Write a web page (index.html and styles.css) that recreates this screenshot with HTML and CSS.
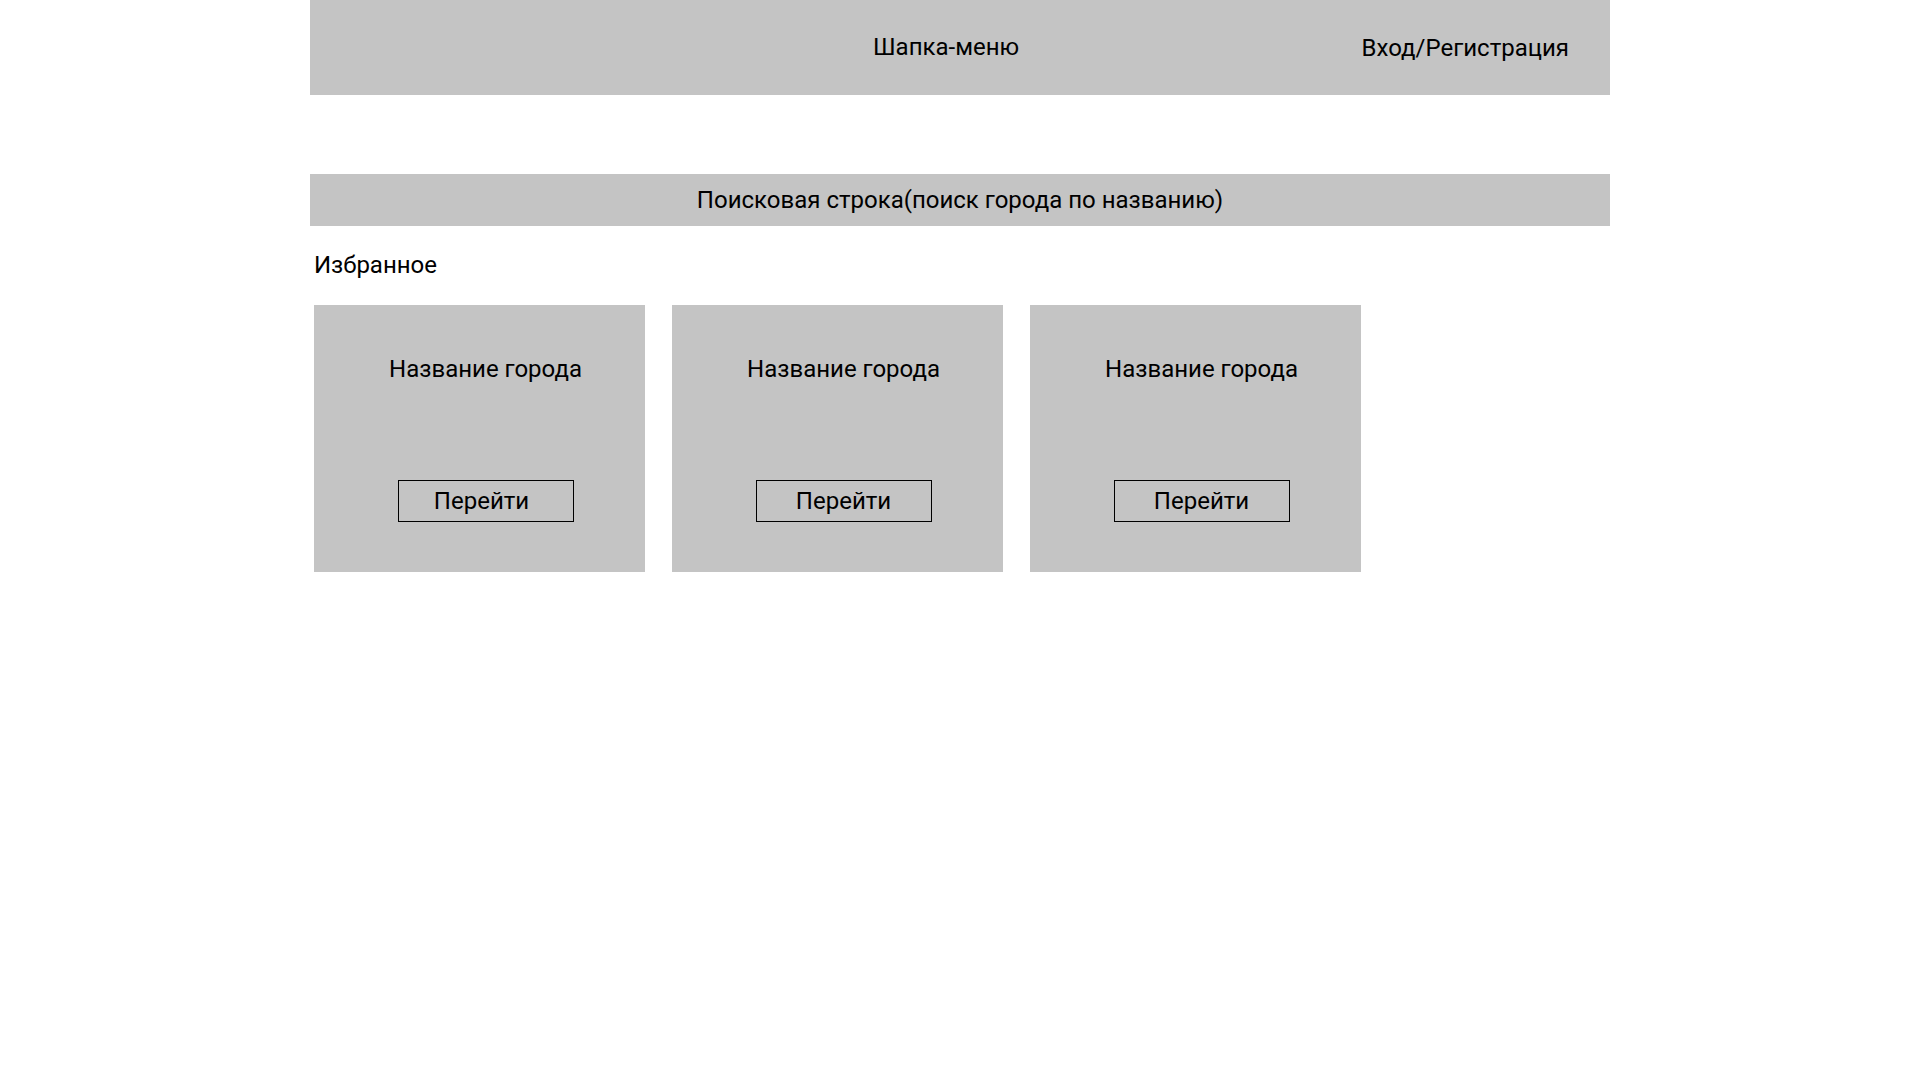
FILE: index.html
```html
<!DOCTYPE html>
<html lang="ru">
<head>
<meta charset="utf-8">
<link rel="stylesheet" href="styles.css">
</head>
<body>
<div class="page">
  <header class="header">
    <div class="header-title">Шапка-меню</div>
    <div class="header-login">Вход/Регистрация</div>
  </header>
  <div class="search">Поисковая строка(поиск города по названию)</div>
  <div class="fav-title">Избранное</div>
  <div class="cards">
    <div class="card">
      <div class="card-name">Название города</div>
      <div class="card-btn card-btn--left">Перейти</div>
    </div>
    <div class="card">
      <div class="card-name">Название города</div>
      <div class="card-btn">Перейти</div>
    </div>
    <div class="card">
      <div class="card-name">Название города</div>
      <div class="card-btn">Перейти</div>
    </div>
  </div>
</div>
</body>
</html>
```
FILE: styles.css
```css
html, body {
  margin: 0;
  padding: 0;
  background: #ffffff;
}
body {
  font-family: Roboto, "Liberation Sans", sans-serif;
  font-size: 24px;
  color: #000;
}
.page {
  width: 1300px;
  margin-left: 310px;
  display: flex;
  flex-direction: column;
}
.header {
  height: 95px;
  box-sizing: border-box;
  padding-bottom: 1px;
  background: #c4c4c4;
  display: flex;
  align-items: center;
}
.header-title {
  margin-left: 563px;
  line-height: 28px;
}
.header-login {
  margin-left: auto;
  margin-right: 41px;
  line-height: 28px;
  padding-top: 2px;
}
.search {
  margin-top: 79px;
  height: 52px;
  background: #c4c4c4;
  display: flex;
  align-items: center;
  justify-content: center;
  line-height: 28px;
}
.fav-title {
  margin-top: 25px;
  margin-left: 4px;
  line-height: 28px;
}
.cards {
  margin-top: 26px;
  margin-left: 4px;
  display: flex;
  gap: 27px;
}
.card {
  width: 331px;
  height: 267px;
  background: #c4c4c4;
  display: flex;
  flex-direction: column;
  align-items: center;
  padding-left: 12px;
  box-sizing: border-box;
}
.card-name {
  margin-top: 50px;
  line-height: 28px;
}
.card-btn {
  margin-top: 97px;
  width: 176px;
  height: 42px;
  box-sizing: border-box;
  border: 1px solid #000;
  display: flex;
  align-items: center;
  justify-content: center;
}
.card-btn--left {
  padding-right: 8px;
}
```
